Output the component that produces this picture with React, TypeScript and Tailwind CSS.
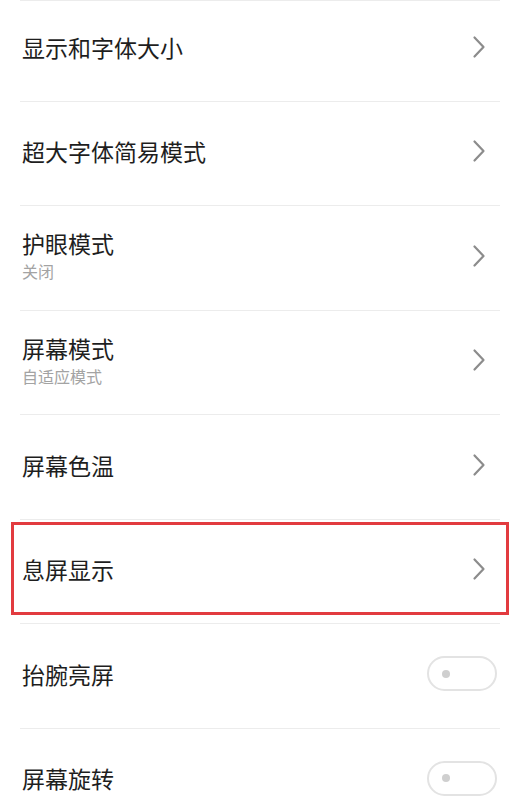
import React from 'react';

type Row = {
  title: string;
  subtitle?: string;
  kind: 'arrow' | 'toggle';
  highlight?: boolean;
};

const rows: Row[] = [
  { title: '超大字体简易模式', kind: 'arrow' },
  { title: '护眼模式', subtitle: '关闭', kind: 'arrow' },
  { title: '屏幕模式', subtitle: '自适应模式', kind: 'arrow' },
  { title: '屏幕色温', kind: 'arrow' },
  { title: '息屏显示', kind: 'arrow', highlight: true },
  { title: '抬腕亮屏', kind: 'toggle' },
  { title: '屏幕旋转', kind: 'toggle' },
];

const Chevron = () => (
  <svg width="14" height="24" viewBox="0 0 14 24" fill="none" className="shrink-0">
    <path d="M2.5 2.5 L11.5 12 L2.5 21.5" stroke="#8c8c8c" strokeWidth="2.2" strokeLinecap="round" strokeLinejoin="round" />
  </svg>
);

const Toggle = () => (
  <div className="w-[70px] h-[35px] rounded-full border-2 border-[#e3e3e3] flex items-center pl-[13px] shrink-0">
    <div className="w-[8px] h-[8px] rounded-full bg-[#cfcfcf]" />
  </div>
);

const SettingRow: React.FC<{ row: Row }> = ({ row }) => (
  <div className="relative">
    <div className="mx-[20px] h-px bg-[#ececec]" />
    <div className="h-[103.5px] flex items-center justify-between pl-[22px] pr-[34px] pb-[4px]">
      <div className="flex flex-col">
        <span className="text-[23px] leading-[26px] text-[#1e1e1e]">{row.title}</span>
        {row.subtitle && (
          <span className="text-[16px] leading-[20px] mt-[5px] text-[#a3a3a3]">{row.subtitle}</span>
        )}
      </div>
      {row.kind === 'arrow' ? <Chevron /> : <div className="-mr-[11px]"><Toggle /></div>}
    </div>
    {row.highlight && (
      <div className="absolute left-[11px] right-[11px] top-[3px] bottom-[8px] border-[3px] border-[#e23b3f] pointer-events-none" />
    )}
  </div>
);

const App: React.FC = () => {
  return (
    <div
      className="w-[520px] h-[807px] overflow-hidden bg-white"
      style={{ fontFamily: '"Noto Sans CJK SC", "Noto Sans", sans-serif' }}
    >
      <div className="mx-[20px] h-px bg-[#ececec]" />
      <div className="h-[99.5px] flex items-center justify-between pl-[22px] pr-[34px] pb-[8px]">
        <span className="text-[23px] leading-[26px] text-[#1e1e1e]">显示和字体大小</span>
        <Chevron />
      </div>
      {rows.map((row) => (
        <SettingRow key={row.title} row={row} />
      ))}
    </div>
  );
};

export default App;
